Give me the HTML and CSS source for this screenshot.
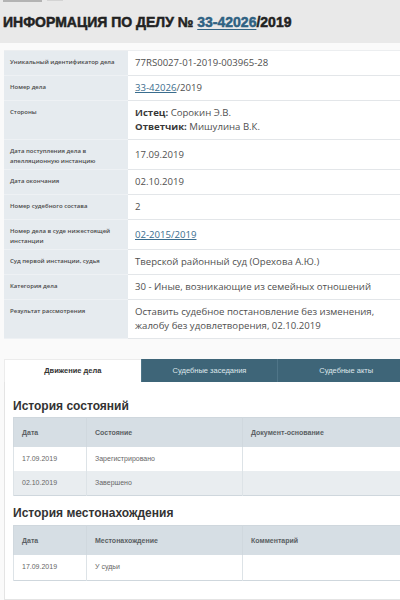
FILE: index.html
```html
<!DOCTYPE html>
<html lang="ru">
<head>
<meta charset="utf-8">
<title>Информация по делу</title>
<link rel="stylesheet" href="styles.css">
</head>
<body>
<div class="top">
  <div class="crumbs"><span class="crumb"></span><span class="crumb faint"></span></div>
  <h1 class="title">ИНФОРМАЦИЯ ПО ДЕЛУ № <a class="title-link" href="#">33-42026</a>/2019</h1>
</div>
<div class="wrap">
  <table class="info">
    <tr><td class="lbl">Уникальный идентификатор дела</td><td class="val">77RS0027-01-2019-003965-28</td></tr>
    <tr><td class="lbl">Номер дела</td><td class="val"><a class="lnk" href="#">33-42026</a>/2019</td></tr>
    <tr><td class="lbl">Стороны</td><td class="val"><b>Истец:</b> Сорокин Э.В.<br><b>Ответчик:</b> Мишулина В.К.</td></tr>
    <tr><td class="lbl">Дата поступления дела в апелляционную инстанцию</td><td class="val">17.09.2019</td></tr>
    <tr><td class="lbl">Дата окончания</td><td class="val">02.10.2019</td></tr>
    <tr><td class="lbl">Номер судебного состава</td><td class="val">2</td></tr>
    <tr><td class="lbl">Номер дела в суде нижестоящей инстанции</td><td class="val"><a class="lnk" href="#">02-2015/2019</a></td></tr>
    <tr><td class="lbl">Суд первой инстанции, судья</td><td class="val">Тверской районный суд (Орехова А.Ю.)</td></tr>
    <tr><td class="lbl">Категория дела</td><td class="val">30 - Иные, возникающие из семейных отношений</td></tr>
    <tr><td class="lbl">Результат рассмотрения</td><td class="val">Оставить судебное постановление без изменения,<br>жалобу без удовлетворения, 02.10.2019</td></tr>
  </table>

  <div class="tabs">
    <div class="tab active">Движение дела</div>
    <div class="tab">Судебные заседания</div>
    <div class="tab">Судебные акты</div>
  </div>

  <div class="panel">
    <h2 class="sect">История состояний</h2>
    <table class="grid">
      <tr><th class="c1">Дата</th><th class="c2">Состояние</th><th>Документ-основание</th></tr>
      <tr><td>17.09.2019</td><td>Зарегистрировано</td><td></td></tr>
      <tr class="alt"><td>02.10.2019</td><td>Завершено</td><td></td></tr>
    </table>
    <h2 class="sect second">История местонахождения</h2>
    <table class="grid">
      <tr><th class="c1">Дата</th><th class="c2">Местонахождение</th><th>Комментарий</th></tr>
      <tr class="tall"><td>17.09.2019</td><td>У судьи</td><td></td></tr>
    </table>
  </div>
</div>
</body>
</html>
```
FILE: styles.css
```css
html, body {
  margin: 0;
  padding: 0;
}
body {
  width: 400px;
  height: 600px;
  overflow: hidden;
  background: #fafafa;
  font-family: "Liberation Sans", Arial, sans-serif;
}
.top {
  background: #e9e9e9;
  height: 43px;
}
.crumbs {
  display: flex;
  gap: 5px;
  padding-left: 3px;
  height: 3px;
}
.crumb {
  display: block;
  width: 39px;
  height: 2px;
  background: #b3b3b3;
}
.crumb.faint {
  width: 16px;
  height: 1px;
  background: #d4d4d4;
}
.title {
  margin: 0;
  padding: 9px 0 11px 3px;
  font-size: 14px;
  line-height: 20px;
  font-weight: bold;
  color: #222;
  -webkit-text-stroke: 0.5px #222;
  white-space: nowrap;
}
.title-link {
  color: #2f6283;
  -webkit-text-stroke: 0.5px #2f6283;
  text-decoration: underline;
  text-decoration-thickness: 1px;
  text-underline-offset: 2px;
}
.wrap {
  margin-left: 4px;
  width: 410px;
  padding-top: 7px;
}
.info {
  width: 410px;
  border-collapse: collapse;
  background: #fff;
}
.info td {
  border-bottom: 1px solid #e3e6e9;
}
.info tr:first-child td {
  border-top: 1px solid #eceef0;
}
.lbl {
  width: 112px;
  background: #e6ebef;
  vertical-align: top;
  padding: 6px 6px 3px 6px;
  font-family: "Open Sans", sans-serif;
  font-size: 6px;
  line-height: 10px;
  font-weight: 600;
  color: #4a4a4a;
  border-bottom-color: #eef1f4 !important;
}
.val {
  vertical-align: middle;
  padding: 5px 7px;
  font-family: "Open Sans", sans-serif;
  font-size: 9.6px;
  line-height: 14px;
  color: #505050;
  white-space: nowrap;
}
.val b {
  color: #383838;
  font-weight: 700;
}
.lnk {
  color: #3a6d8e;
  text-decoration: underline;
}
.tabs {
  margin-top: 20px;
  display: flex;
  height: 23px;
}
.tab {
  flex: 1;
  text-align: center;
  font-size: 7.5px;
  line-height: 23px;
  background: #3e6578;
  color: #dfe7eb;
  border-left: 1px solid #4f7588;
}
.tab.active {
  background: #fff;
  color: #333;
  font-weight: bold;
  border-left: 1px solid #ececec;
  border-top: 1px solid #ececec;
  line-height: 22px;
}
.panel {
  background: #fff;
  border: 1px solid #e4e4e4;
  border-top: none;
  padding: 17px 8px 18px 8px;
}
.sect {
  margin: 0 0 4px 0;
  font-size: 12px;
  line-height: 14px;
  font-weight: bold;
  color: #333;
}
.sect.second {
  margin-top: 10px;
  margin-bottom: 5px;
}
.grid {
  width: 100%;
  border-collapse: collapse;
  border: 1px solid #cfd7dd;
  font-size: 7px;
}
.grid th {
  background: #d6dee4;
  text-align: left;
  font-weight: bold;
  color: #5a5f63;
  padding: 10px 8px 9px 8px;
  line-height: 10px;
  border-left: 1px solid #d0d8de;
}
.grid td {
  padding: 7px 8px;
  line-height: 10px;
  color: #666;
  border-left: 1px solid #dde3e7;
}
.grid tr.alt td {
  background: #e9edf0;
}
.grid tr.tall td {
  padding: 7px 8px 8px 8px;
}
.c1 { width: 56px; }
.c2 { width: 139px; }
```
